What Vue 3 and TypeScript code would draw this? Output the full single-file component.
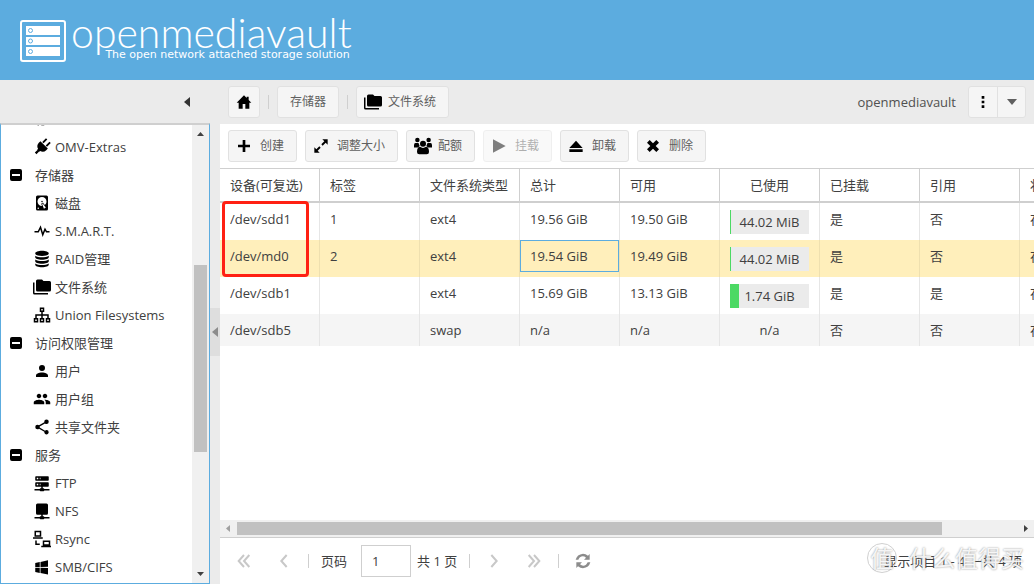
<script setup lang="ts">
import { ref } from 'vue'

interface Shape {
  fill?: string
  line?: string
  width?: number
  turn?: string
}

interface TreeItem {
  icon: string
  label: string
}

interface TreeGroup {
  label: string
  items: TreeItem[]
}

interface FileSystem {
  device: string
  label: string
  type: string
  total: string
  free: string
  used: string
  percent: number | null
  mounted: string
  referenced: string
  status: string
}

const icons: Record<string, Shape> = {
  update: { fill: 'M4 4H20V18H4ZM6 18H8V21H6ZM11 18H15V21H11Z' },
  plug: {
    fill: 'M7.5 0H10V7H7.5ZM14 0H16.5V7H14ZM5 8H19V11A7 7 0 0 1 14 17.500V19H13.500V24H10.500V19H10V17.500A7 7 0 0 1 5 11Z',
    turn: 'rotate(45 12 12)',
  },
  disk: {
    fill: 'M6,2H18A2,2 0 0,1 20,4V20A2,2 0 0,1 18,22H6A2,2 0 0,1 4,20V4A2,2 0 0,1 6,2M12,4A6,6 0 0,0 6,10C6,13.31 8.69,16 12.1,16L11.22,13.77C10.95,13.29 11.11,12.68 11.59,12.4L12.45,11.9C12.93,11.63 13.54,11.79 13.82,12.27L15.74,14.69C17.12,13.59 18,11.9 18,10A6,6 0 0,0 12,4M12,9A1,1 0 0,1 13,10A1,1 0 0,1 12,11A1,1 0 0,1 11,10A1,1 0 0,1 12,9M7,18A1,1 0 0,0 6,19A1,1 0 0,0 7,20A1,1 0 0,0 8,19A1,1 0 0,0 7,18M12.09,13.27L14.58,19.58L17.17,18.08L12.95,12.77L12.09,13.27Z',
  },
  pulse: { line: 'M2 13H7L10 7L13 17L16 9.500L18 13H22', width: 2 },
  database: {
    fill: 'M3 4.500C3 2.600 7 1 12 1S21 2.600 21 4.500S17 8 12 8S3 6.400 3 4.500ZM3 7.500C5 9 8.500 9.600 12 9.600S19 9 21 7.500V9.700C21 11.600 17 13 12 13S3 11.600 3 9.700ZM3 12.700C5 14.200 8.500 14.800 12 14.800S19 14.200 21 12.700V14.900C21 16.800 17 18.200 12 18.200S3 16.800 3 14.900ZM3 17.900C5 19.400 8.500 20 12 20S19 19.400 21 17.900V19.600C21 21.500 17 23 12 23S3 21.500 3 19.600Z',
  },
  folders: {
    fill: 'M22,4H14L12,2H6A2,2 0 0,0 4,4V16A2,2 0 0,0 6,18H22A2,2 0 0,0 24,16V6A2,2 0 0,0 22,4M2,6H0V20A2,2 0 0,0 2,22H20V20H2V6Z',
  },
  sitemap: {
    line: 'M10 3H14V7H10ZM2 17H6V21H2ZM10 17H14V21H10ZM18 17H22V21H18ZM12 7V17M4 17V12H20V17',
    width: 2,
  },
  user: {
    fill: 'M12,4A4,4 0 0,1 16,8A4,4 0 0,1 12,12A4,4 0 0,1 8,8A4,4 0 0,1 12,4M12,14C16.42,14 20,15.79 20,18V20H4V18C4,15.79 7.58,14 12,14Z',
  },
  group: {
    fill: 'M16 11c1.660 0 2.990-1.340 2.990-3S17.660 5 16 5s-3 1.340-3 3 1.340 3 3 3zM8 11c1.660 0 2.990-1.340 2.990-3S9.660 5 8 5 5 6.340 5 8s1.340 3 3 3zM8 13c-2.330 0-7 1.170-7 3.500V19h14v-2.500C15 14.170 10.330 13 8 13zM16 13c-.290 0-.620.020-.970.050C16.190 13.890 17 15.020 17 16.500V19h6v-2.500C23 14.170 18.330 13 16 13z',
  },
  share: {
    fill: 'M18,16.08C17.24,16.08 16.56,16.38 16.04,16.85L8.91,12.7C8.96,12.47 9,12.24 9,12C9,11.76 8.96,11.53 8.91,11.3L15.96,7.19C16.5,7.69 17.21,8 18,8A3,3 0 0,0 21,5A3,3 0 0,0 18,2A3,3 0 0,0 15,5C15,5.24 15.04,5.47 15.09,5.7L8.04,9.81C7.5,9.31 6.79,9 6,9A3,3 0 0,0 3,12A3,3 0 0,0 6,15C6.79,15 7.5,14.69 8.04,14.19L15.16,18.34C15.11,18.55 15.08,18.77 15.08,19C15.08,20.61 16.39,21.91 18,21.91C19.61,21.91 20.92,20.61 20.92,19A2.92,2.92 0 0,0 18,16.08Z',
  },
  ftp: {
    fill: 'M13,19H14A1,1 0 0,1 15,20H22V22H15A1,1 0 0,1 14,23H10A1,1 0 0,1 9,22H2V20H9A1,1 0 0,1 10,19H11V17H4A1,1 0 0,1 3,16V12A1,1 0 0,1 4,11H20A1,1 0 0,1 21,12V16A1,1 0 0,1 20,17H13V19M4,3H20A1,1 0 0,1 21,4V8A1,1 0 0,1 20,9H4A1,1 0 0,1 3,8V4A1,1 0 0,1 4,3M9,7H10V5H9V7M9,15H10V13H9V15M5,5V7H7V5H5M5,13V15H7V13H5Z',
  },
  nfs: {
    fill: 'M13,19H14A1,1 0 0,1 15,20H22V22H15A1,1 0 0,1 14,23H10A1,1 0 0,1 9,22H2V20H9A1,1 0 0,1 10,19H11V17H6A2,2 0 0,1 4,15V4A2,2 0 0,1 6,2H18A2,2 0 0,1 20,4V15A2,2 0 0,1 18,17H13Z',
  },
  rsync: {
    line: 'M3 2H10V8H3ZM0 10.500H13M14 15H22V20H14ZM11 22H24M4 14V19H9',
    width: 2,
  },
  windows: {
    fill: 'M3,12V6.75L9,5.43V11.91L3,12M20,3V11.75L10,11.9V5.21L20,3M3,13L9,13.09V19.9L3,18.75V13M20,13.25V22L10,20.09V13.1L20,13.25Z',
  },
  home: { fill: 'M12 2L1 13H4V22H10V15H14V22H20V13H23L19 9V4H16V6Z' },
  plus: { fill: 'M10 3H14V10H21V14H14V21H10V14H3V10H10Z' },
  resize: { fill: 'M14 2H22V10L19 7L14.500 11.500L12.500 9.500L17 5ZM2 14L5 17L9.500 12.500L11.500 14.500L7 19L10 22H2Z' },
  quota: {
    fill: 'M12 5A4 4 0 0 1 12 13A4 4 0 0 1 12 5ZM4.500 1A3 3 0 0 1 4.500 7A3 3 0 0 1 4.500 1ZM19.500 1A3 3 0 0 1 19.500 7A3 3 0 0 1 19.500 1ZM2 8H6L7.500 12L5.500 14H0V11Q0 8 2 8ZM22 8H18L16.500 12L18.500 14H24V11Q24 8 22 8ZM8 13Q12 16 16 13Q20 13.500 20 20Q20 23 17 23H7Q4 23 4 20Q4 13.500 8 13Z',
  },
  play: { fill: 'M3 2L22 12L3 22Z' },
  eject: { fill: 'M12 4L22 15H2ZM2 17H22V21H2Z' },
  cross: { fill: 'M3 7L7 3L12 8L17 3L21 7L16 12L21 17L17 21L12 16L7 21L3 17L8 12Z' },
  dots: { fill: 'M10 3H14V7H10ZM10 10H14V14H10ZM10 17H14V21H10Z' },
  first: { line: 'M12 3L4 12L12 21M20 3L12 12L20 21' },
  prev: { line: 'M16 3L8 12L16 21' },
  next: { line: 'M8 3L16 12L8 21' },
  last: { line: 'M4 3L12 12L4 21M12 3L20 12L12 21' },
  refresh: {
    fill: 'M1 10Q3 2 12 1Q16 1 19.500 4L22 1.500V10H13.500L16.500 7Q12 3 7.500 6.500Q6 8 5 10ZM23 14Q21 22 12 23Q8 23 4.500 20L2 22.500V14H10.500L7.500 17Q12 21 16.500 17.500Q18 16 19 14Z',
  },
}

const groups: TreeGroup[] = [
  {
    label: '存储器',
    items: [
      { icon: 'disk', label: '磁盘' },
      { icon: 'pulse', label: 'S.M.A.R.T.' },
      { icon: 'database', label: 'RAID管理' },
      { icon: 'folders', label: '文件系统' },
      { icon: 'sitemap', label: 'Union Filesystems' },
    ],
  },
  {
    label: '访问权限管理',
    items: [
      { icon: 'user', label: '用户' },
      { icon: 'group', label: '用户组' },
      { icon: 'share', label: '共享文件夹' },
    ],
  },
  {
    label: '服务',
    items: [
      { icon: 'ftp', label: 'FTP' },
      { icon: 'nfs', label: 'NFS' },
      { icon: 'rsync', label: 'Rsync' },
      { icon: 'windows', label: 'SMB/CIFS' },
    ],
  },
]

const actions = [
  { icon: 'plus', label: '创建', disabled: false },
  { icon: 'resize', label: '调整大小', disabled: false },
  { icon: 'quota', label: '配额', disabled: false },
  { icon: 'play', label: '挂载', disabled: true },
  { icon: 'eject', label: '卸载', disabled: false },
  { icon: 'cross', label: '删除', disabled: false },
]

const columns = ['设备(可复选)', '标签', '文件系统类型', '总计', '可用', '已使用', '已挂载', '引用', '状态']

const rows: FileSystem[] = [
  { device: '/dev/sdd1', label: '1', type: 'ext4', total: '19.56 GiB', free: '19.50 GiB', used: '44.02 MiB', percent: 1, mounted: '是', referenced: '否', status: '在线' },
  { device: '/dev/md0', label: '2', type: 'ext4', total: '19.54 GiB', free: '19.49 GiB', used: '44.02 MiB', percent: 1, mounted: '是', referenced: '否', status: '在线' },
  { device: '/dev/sdb1', label: '', type: 'ext4', total: '15.69 GiB', free: '13.13 GiB', used: '1.74 GiB', percent: 11, mounted: '是', referenced: '是', status: '在线' },
  { device: '/dev/sdb5', label: '', type: 'swap', total: 'n/a', free: 'n/a', used: 'n/a', percent: null, mounted: '否', referenced: '否', status: '在线' },
]

const selected = ref(1)
const page = ref('1')
</script>

<template>
  <div class="app">
    <header class="banner">
      <svg class="logo" viewBox="0 0 46 42" aria-hidden="true">
        <rect x="1" y="1" width="44" height="40" rx="2" fill="none" stroke="#fff" stroke-width="2" />
        <g fill="#fff">
          <rect x="6" y="6" width="34" height="9" />
          <rect x="6" y="17" width="34" height="8" />
          <rect x="6" y="27" width="34" height="9" />
        </g>
        <g fill="none" stroke="#5cacdf">
          <circle cx="10.500" cy="10.500" r="2" />
          <circle cx="10.500" cy="21" r="2" />
          <circle cx="10.500" cy="31.500" r="2" />
        </g>
      </svg>
      <div class="brand">
        <span class="brand-name">openmediavault</span>
        <span class="tagline">The open network attached storage solution</span>
      </div>
    </header>

    <div class="body">
      <aside class="sidebar">
        <div class="sidebar-head">
          <button class="collapse" type="button" aria-label="收起">
            <svg viewBox="0 0 6 10"><path d="M6 0V10L0 5Z" /></svg>
          </button>
        </div>
        <div class="tree">
          <nav class="tree-view">
            <ul>
              <li class="leaf">
                <svg class="icon faint" viewBox="0 0 24 24"><path :d="icons.update.fill" /></svg>
              </li>
              <li class="leaf">
                <svg class="icon" viewBox="0 0 24 24"><path :d="icons.plug.fill" :transform="icons.plug.turn" /></svg>
                <a href="#">OMV-Extras</a>
              </li>
              <li v-for="group in groups" :key="group.label">
                <div class="branch">
                  <button class="toggle" type="button" :aria-label="group.label">
                    <svg viewBox="0 0 12 12"><path fill-rule="evenodd" d="M2 0H10Q12 0 12 2V10Q12 12 10 12H2Q0 12 0 10V2Q0 0 2 0ZM2 5V7H10V5Z" /></svg>
                  </button>
                  <span>{{ group.label }}</span>
                </div>
                <ul>
                  <li v-for="item in group.items" :key="item.label" class="leaf">
                    <svg class="icon" viewBox="0 0 24 24">
                      <path v-if="icons[item.icon].fill" :d="icons[item.icon].fill" fill-rule="evenodd" />
                      <path v-else class="line" :d="icons[item.icon].line" :stroke-width="icons[item.icon].width" />
                    </svg>
                    <a href="#">{{ item.label }}</a>
                  </li>
                </ul>
              </li>
            </ul>
          </nav>
          <div class="vbar">
            <svg class="vbar-arrow" viewBox="0 0 17 17"><path d="M5 11H12L8.500 7Z" /></svg>
            <div class="vbar-before"></div>
            <div class="vbar-thumb"></div>
            <div class="vbar-after"></div>
            <svg class="vbar-arrow" viewBox="0 0 17 17"><path d="M5 6H12L8.500 10Z" /></svg>
          </div>
        </div>
      </aside>

      <div class="splitter">
        <button type="button" aria-label="折叠">
          <svg viewBox="0 0 6 10"><path d="M6 0V10L0 5Z" /></svg>
        </button>
      </div>

      <main class="content">
        <div class="topbar">
          <button class="btn square" type="button" aria-label="主页">
            <svg class="glyph" viewBox="0 0 24 24"><path :d="icons.home.fill" /></svg>
          </button>
          <i class="sep"></i>
          <button class="btn plain" type="button">存储器</button>
          <i class="sep"></i>
          <button class="btn" type="button">
            <svg class="icon" viewBox="0 0 24 24"><path :d="icons.folders.fill" /></svg>
            文件系统
          </button>
          <span class="host">openmediavault</span>
          <div class="pair">
            <button type="button" aria-label="更多">
              <svg class="glyph" viewBox="0 0 24 24"><path :d="icons.dots.fill" /></svg>
            </button>
            <button type="button" aria-label="菜单">
              <svg class="caret" viewBox="0 0 10 6"><path d="M0 0H10L5 6Z" /></svg>
            </button>
          </div>
        </div>

        <div class="toolbar">
          <button v-for="action in actions" :key="action.icon" class="btn" type="button" :disabled="action.disabled">
            <svg :class="action.icon === 'quota' ? 'icon' : 'glyph'" viewBox="0 0 24 24">
              <path :d="icons[action.icon].fill" />
            </svg>
            {{ action.label }}
          </button>
        </div>

        <div class="grid">
          <table>
            <thead>
              <tr>
                <th v-for="name in columns" :key="name" :class="{ center: name === '已使用' }">{{ name }}</th>
              </tr>
            </thead>
            <tbody>
              <tr v-for="(row, index) in rows" :key="row.device" :class="{ selected: index === selected }" @click="selected = index">
                <td>{{ row.device }}</td>
                <td>{{ row.label }}</td>
                <td>{{ row.type }}</td>
                <td :class="{ focused: index === selected }">{{ row.total }}</td>
                <td>{{ row.free }}</td>
                <td class="center">
                  <div v-if="row.percent !== null" class="meter">
                    <div class="meter-fill" :style="{ width: row.percent + '%' }"></div>
                    <span>{{ row.used }}</span>
                  </div>
                  <template v-else>{{ row.used }}</template>
                </td>
                <td>{{ row.mounted }}</td>
                <td>{{ row.referenced }}</td>
                <td>{{ row.status }}</td>
              </tr>
            </tbody>
          </table>
          <div class="marker"></div>
        </div>

        <div class="hbar">
          <svg class="hbar-arrow muted" viewBox="0 0 17 17"><path d="M10 5V12L6 8.500Z" /></svg>
          <div class="hbar-thumb"></div>
          <div class="hbar-after"></div>
          <svg class="hbar-arrow" viewBox="0 0 17 17"><path d="M7 5V12L11 8.500Z" /></svg>
        </div>

        <footer class="pager">
          <button type="button" aria-label="第一页" disabled>
            <svg viewBox="0 0 24 24"><path class="line" :d="icons.first.line" stroke-width="3" /></svg>
          </button>
          <button type="button" aria-label="上一页" disabled>
            <svg viewBox="0 0 24 24"><path class="line" :d="icons.prev.line" stroke-width="3" /></svg>
          </button>
          <i class="sep"></i>
          <label for="page">页码</label>
          <input id="page" v-model="page" type="text" />
          <span class="pages">共 1 页</span>
          <i class="sep"></i>
          <button type="button" aria-label="下一页" disabled>
            <svg viewBox="0 0 24 24"><path class="line" :d="icons.next.line" stroke-width="3" /></svg>
          </button>
          <button type="button" aria-label="最后一页" disabled>
            <svg viewBox="0 0 24 24"><path class="line" :d="icons.last.line" stroke-width="3" /></svg>
          </button>
          <i class="sep"></i>
          <button class="refresh" type="button" aria-label="刷新">
            <svg viewBox="0 0 24 24"><path :d="icons.refresh.fill" /></svg>
          </button>
          <span class="summary">显示项目 1 - 4 一共 4 项</span>
          <div class="watermark">
            <span class="seal">值</span>
            <span>什么值得买</span>
          </div>
        </footer>
      </main>
    </div>
  </div>
</template>

<style>
body {
  margin: 0;
  overflow: hidden;
}
</style>

<style scoped>
.app,
.app *,
.focused::after {
  box-sizing: border-box;
}
.app {
  display: flex;
  flex-direction: column;
  height: 100vh;
  font: 13px/20px "Open Sans", "Noto Sans CJK SC", sans-serif;
  color: #404040;
  background: #ebebeb;
}
button {
  margin: 0;
  padding: 0;
  border: 0;
  background: none;
  font: inherit;
  color: inherit;
}
svg {
  display: block;
  flex: none;
}
ul {
  margin: 0;
  padding: 0;
  list-style: none;
}
.line {
  fill: none;
  stroke: currentColor;
}
.icon {
  width: 18px;
  height: 18px;
  color: #000;
}
.icon.faint {
  opacity: 0.4;
}
.glyph {
  width: 16px;
  height: 16px;
  color: #000;
}

.banner {
  display: flex;
  flex: none;
  height: 80px;
  padding: 20px 20px 0;
  gap: 5px;
  color: #fff;
  background: #5cacdf;
}
.logo {
  width: 46px;
  height: 42px;
}
.brand {
  display: flex;
  flex-direction: column;
  align-items: flex-end;
  gap: 3px;
}
.brand-name {
  font: 300 41px/26px Lato, sans-serif;
}
.tagline {
  padding-right: 2px;
  font: 11px/12px "DejaVu Sans", sans-serif;
}

.body {
  display: flex;
  flex: 1;
  min-height: 0;
}
.sidebar {
  display: flex;
  flex-direction: column;
  flex: none;
  width: 210px;
}
.sidebar-head {
  display: flex;
  align-items: center;
  justify-content: flex-end;
  height: 43px;
  padding-right: 20px;
}
.collapse svg {
  width: 6px;
  height: 10px;
  fill: #333;
}
.tree {
  display: flex;
  flex: 1;
  min-height: 0;
  border: 1px solid #5cacdf;
  border-top: 2px solid #cfcfcf;
  background: #fff;
}
.tree-view {
  flex: 1;
  min-width: 0;
  overflow: hidden;
}
.tree-view > ul {
  margin-top: -20px;
}
.leaf,
.branch {
  display: flex;
  align-items: center;
  height: 28px;
  white-space: nowrap;
}
.leaf {
  gap: 4px;
  padding-left: 32px;
}
.leaf a {
  color: inherit;
  text-decoration: none;
}
.branch {
  gap: 13px;
  padding-left: 9px;
}
.toggle svg {
  width: 12px;
  height: 12px;
}
.vbar {
  display: flex;
  flex-direction: column;
  width: 17px;
  background: #f0f0f0;
}
.vbar-arrow {
  width: 17px;
  height: 17px;
  fill: #404040;
}
.vbar-before {
  flex: 123;
}
.vbar-thumb {
  flex: 187;
  margin: 0 2px;
  background: #c1c1c1;
}
.vbar-after {
  flex: 114;
}

.splitter {
  display: flex;
  flex: none;
  align-items: center;
  width: 10px;
}
.splitter button {
  display: flex;
  align-items: center;
  justify-content: center;
  width: 10px;
  height: 48px;
  background: #dedede;
}
.splitter svg {
  width: 6px;
  height: 10px;
  fill: #8c8c8c;
}

.content {
  display: flex;
  flex: 1;
  flex-direction: column;
  min-width: 0;
  background: #fff;
}
.topbar {
  display: flex;
  flex: none;
  align-items: center;
  height: 44px;
  padding: 0 8px;
  background: #ebebeb;
}
.toolbar {
  display: flex;
  flex: none;
  align-items: center;
  gap: 8px;
  height: 44px;
  padding: 0 8px;
}
.btn {
  display: flex;
  align-items: center;
  gap: 8px;
  height: 32px;
  padding: 0 12px 0 7px;
  border: 1px solid #e1e1e1;
  border-radius: 3px;
  background: #f5f5f5;
  color: #606060;
  font-size: 12px;
  white-space: nowrap;
}
.btn .icon {
  margin-right: -2px;
}
.btn:disabled {
  opacity: 0.5;
}
.btn.square {
  padding: 0 7px;
}
.btn.plain {
  padding: 0 12px;
}
.sep {
  flex: none;
  width: 1px;
  height: 14px;
  margin: 0 8px;
  background: #cfcfcf;
}
.host {
  margin-left: auto;
  padding-right: 12px;
  color: #505050;
}
.pair {
  display: flex;
  height: 32px;
  border: 1px solid #e1e1e1;
  border-radius: 3px;
  background: #f5f5f5;
}
.pair button {
  display: flex;
  align-items: center;
  justify-content: center;
  width: 28px;
}
.pair button + button {
  border-left: 1px solid #e1e1e1;
}
.caret {
  width: 10px;
  height: 6px;
  fill: #606060;
}

.grid {
  position: relative;
  flex: 1;
  min-height: 0;
  overflow: hidden;
  border-top: 1px solid #cfcfcf;
}
table {
  width: 900px;
  table-layout: fixed;
  border-collapse: separate;
  border-spacing: 0;
}
th {
  height: 34px;
  padding: 0 10px;
  border-right: 1px solid #cfcfcf;
  border-bottom: 2px solid #cfcfcf;
  font-weight: 400;
  text-align: left;
  white-space: nowrap;
}
td {
  padding: 6px 10px;
  border-right: 1px solid #e6e6e6;
  vertical-align: top;
  white-space: nowrap;
}
th.center,
td.center {
  text-align: center;
}
tbody tr:nth-child(even) {
  background: #f5f5f5;
}
tbody tr.selected {
  background: #ffefbb;
}
.selected td {
  border-color: #efe0af;
}
.focused {
  position: relative;
}
.focused::after {
  position: absolute;
  top: 0;
  right: 0;
  left: 0;
  height: 32px;
  border: 1px solid #5cacdf;
  content: "";
}
.meter {
  display: grid;
  height: 24px;
  margin-top: 1px;
  background: #ebebeb;
  line-height: 24px;
}
.meter > * {
  grid-area: 1 / 1;
}
.meter-fill {
  background: #4cd964;
}
.marker {
  position: absolute;
  top: 32px;
  left: 2px;
  width: 87px;
  height: 76px;
  border: 3px solid #ff2013;
  border-radius: 4px;
}

.hbar {
  display: flex;
  flex: none;
  height: 17px;
  background: #f0f0f0;
}
.hbar-arrow {
  width: 17px;
  height: 17px;
  fill: #404040;
}
.hbar-arrow.muted {
  fill: #a0a0a0;
}
.hbar-thumb {
  flex: 705;
  margin: 2px 0;
  background: #c1c1c1;
}
.hbar-after {
  flex: 75;
}

.pager {
  position: relative;
  display: flex;
  flex: none;
  align-items: center;
  height: 47px;
  padding: 0 12px 0 8px;
  border-top: 1px solid #cfcfcf;
}
.pager button {
  display: flex;
  align-items: center;
  justify-content: center;
  width: 32px;
  height: 32px;
  margin-right: 8px;
  color: #c8c8c8;
}
.pager button svg {
  width: 16px;
  height: 16px;
}
.pager .sep {
  margin: 0 8px 0 0;
}
.pager label {
  margin-left: 4px;
}
.pager .refresh {
  margin: 0;
  color: #8c8c8c;
}
.refresh path {
  fill: currentColor;
}
.pager input {
  width: 50px;
  height: 32px;
  margin: 0 6px 0 14px;
  padding: 0 10px;
  border: 1px solid #cfcfcf;
  background: #fff;
  color: #404040;
  font: inherit;
}
.pages {
  margin-right: 12px;
}
.summary {
  margin-left: auto;
}
.watermark {
  position: absolute;
  top: 4px;
  right: 10px;
  display: flex;
  align-items: center;
  gap: 12px;
  color: rgba(255, 255, 255, 0.9);
  font-size: 23px;
  line-height: 32px;
  text-shadow: 0 0 2px #888;
}
.seal {
  width: 30px;
  height: 30px;
  border: 1px solid #d0d0d0;
  border-radius: 50%;
  line-height: 28px;
  text-align: center;
}
</style>
